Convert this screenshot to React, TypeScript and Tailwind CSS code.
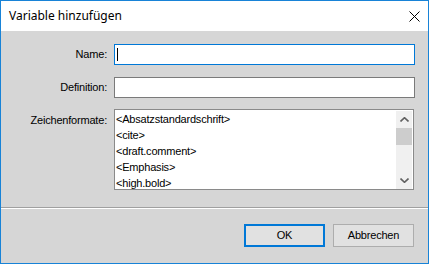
import React from "react";

const sans = "font-['Liberation_Sans',Arial,sans-serif] text-[11px] tracking-[-0.2px] text-black";

function Chevron({ up }: { up?: boolean }) {
  return (
    <svg width="9" height="5" viewBox="0 0 9 5" className="block">
      <path
        d={up ? "M0.5 4.5 L4.5 0.7 L8.5 4.5" : "M0.5 0.5 L4.5 4.3 L8.5 0.5"}
        fill="none"
        stroke="#606060"
        strokeWidth="1.6"
      />
    </svg>
  );
}

export default function App() {
  const items = [
    "<Absatzstandardschrift>",
    "<cite>",
    "<draft.comment>",
    "<Emphasis>",
    "<high.bold>",
  ];
  return (
    <div className="w-[430px] h-[264px] bg-white">
      <div className="w-[429px] h-[264px] border border-[#1883d7] flex flex-col">
        {/* Title bar */}
        <div className="h-[30px] bg-white flex items-center justify-between pl-[8px] pr-[8px] shrink-0">
          <span className="font-['Noto_Sans',sans-serif] text-[12px] text-black leading-none">
            Variable hinzufügen
          </span>
          <svg width="11" height="11" viewBox="0 0 11 11" className="block">
            <path d="M0.5 0.5 L10.5 10.5 M10.5 0.5 L0.5 10.5" stroke="#000" strokeWidth="1" />
          </svg>
        </div>
        {/* Body */}
        <div className={`flex-1 bg-[#d6d6d6] flex flex-col ${sans}`}>
          <div className="grid grid-cols-[106px_301px] gap-x-[7px] mt-[13px]">
            <div className="h-[21px] flex items-center justify-end">Name:</div>
            <div className="h-[21px] bg-white border border-[#0078d7] flex items-center pl-[2px]">
              <div className="w-px h-[13px] bg-black" />
            </div>

            <div className="h-[21px] mt-[12px] flex items-center justify-end">Definition:</div>
            <div className="h-[21px] mt-[12px] bg-white border border-[#7a7a7a]" />

            <div className="mt-[11px] pt-[3px] flex justify-end leading-[16px]">Zeichenformate:</div>
            <div className="mt-[11px] w-[300px] h-[81px] bg-white border border-[#8a8a8a] flex overflow-hidden">
              <div className="flex-1 pl-[1px] pt-[1px] leading-[16px] overflow-hidden">
                {items.map((t) => (
                  <div key={t} className="h-[16px] whitespace-nowrap">
                    {t}
                  </div>
                ))}
              </div>
              <div className="w-[16px] mt-[1px] mr-[1px] mb-0 bg-[#f0f0f0] flex flex-col">
                <div className="h-[17px] flex items-center justify-center">
                  <Chevron up />
                </div>
                <div className="h-[17px] bg-[#cdcdcd]" />
                <div className="flex-1" />
                <div className="h-[17px] flex items-center justify-center">
                  <Chevron />
                </div>
              </div>
            </div>
          </div>

          {/* Separator */}
          <div className="mt-[17px] h-px bg-[#a0a0a0]" />
          <div className="h-px bg-white" />

          {/* Buttons */}
          <div className="mt-[15px] flex justify-end gap-[8px] pr-[14px]">
            <div className="w-[81px] h-[23px] bg-[#e1e1e1] border-2 border-[#0078d7] flex items-center justify-center">
              OK
            </div>
            <div className="w-[81px] h-[23px] bg-[#e1e1e1] border border-[#adadad] flex items-center justify-center">
              Abbrechen
            </div>
          </div>
        </div>
      </div>
    </div>
  );
}
